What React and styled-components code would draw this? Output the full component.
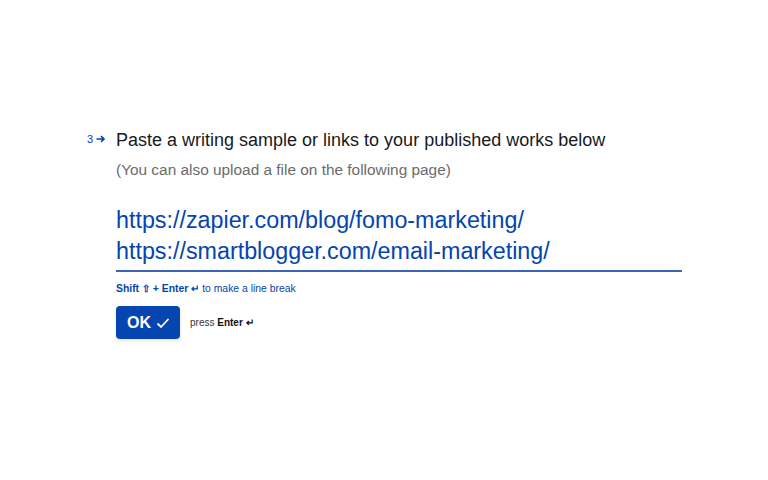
import React from "react";
import styled, { createGlobalStyle } from "styled-components";

const Global = createGlobalStyle`
  html, body { margin: 0; padding: 0; background: #fff; }
  body { font-family: "Liberation Sans", Arial, sans-serif; }
`;

const Page = styled.div`
  width: 768px;
  height: 480px;
  box-sizing: border-box;
  padding: 128px 86px 0 116px;
`;

const Question = styled.div`
  position: relative;
`;

const Counter = styled.div`
  position: absolute;
  left: -29px;
  top: 5px;
  display: flex;
  align-items: center;
  gap: 3px;
  font-size: 11px;
  color: #0445af;
`;

const Title = styled.h1`
  margin: 0;
  font-size: 18px;
  font-weight: 400;
  line-height: 24px;
  color: #191919;
`;

const Sub = styled.p`
  margin: 7px 0 0;
  font-size: 15.4px;
  line-height: 22px;
  color: #6b6b6b;
`;

const Answer = styled.div`
  margin-top: 24px;
  padding-bottom: 3px;
  border-bottom: 2px solid #3c65b8;
  font-size: 23.3px;
  line-height: 31px;
  color: #0445af;
`;

const Hint = styled.div`
  margin-top: 10px;
  font-size: 10.4px;
  color: #0445af;
  b { font-weight: 700; }
`;

const Actions = styled.div`
  margin-top: 12px;
  display: flex;
  align-items: center;
  gap: 10px;
`;

const OkButton = styled.button`
  display: flex;
  align-items: center;
  gap: 5px;
  height: 33px;
  padding: 0 10px 0 11px;
  border: none;
  border-radius: 4px;
  background: #0445af;
  color: #fff;
  font-family: inherit;
  font-size: 16px;
  font-weight: 700;
  box-shadow: 0 2px 4px rgba(0,0,0,0.1);
`;

const Press = styled.span`
  font-size: 10px;
  color: #333;
  b { font-weight: 700; color: #111; }
`;

export default function App() {
  return (
    <>
      <Global />
      <Page>
        <Question>
          <Counter>
            <span>3</span>
            <svg width="10" height="8" viewBox="0 0 10 8">
              <path d="M0.5 4h7.5M5 1.2L8 4 5 6.8" stroke="#0445af" strokeWidth="1.6" fill="none" />
            </svg>
          </Counter>
          <Title>Paste a writing sample or links to your published works below</Title>
          <Sub>(You can also upload a file on the following page)</Sub>
        </Question>
        <Answer>
          https://zapier.com/blog/fomo-marketing/
          <br />
          https://smartblogger.com/email-marketing/
        </Answer>
        <Hint>
          <b>Shift ⇧ + Enter ↵</b> to make a line break
        </Hint>
        <Actions>
          <OkButton>
            OK
            <svg width="14" height="12" viewBox="0 0 14 12">
              <path d="M1.5 6.5l3.5 3.5 7.5-8" stroke="#fff" strokeWidth="1.8" fill="none" />
            </svg>
          </OkButton>
          <Press>
            press <b>Enter ↵</b>
          </Press>
        </Actions>
      </Page>
    </>
  );
}
